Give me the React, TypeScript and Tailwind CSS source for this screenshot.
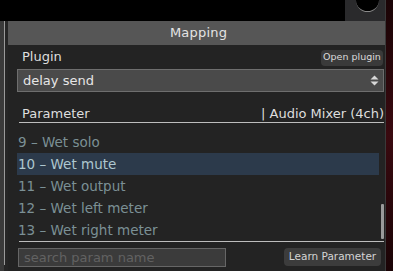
import React from 'react';

const rows = [
  { id: 9, name: 'Wet solo' },
  { id: 10, name: 'Wet mute' },
  { id: 11, name: 'Wet output' },
  { id: 12, name: 'Wet left meter' },
  { id: 13, name: 'Wet right meter' },
];

export default function App() {
  const selected = 10;
  return (
    <div className="flex h-[271px] w-[393px] overflow-hidden bg-black text-[#dcdcdc]" style={{ fontFamily: '"DejaVu Sans", "Liberation Sans", sans-serif' }}>
      {/* left strip */}
      <div className="flex w-[8px] flex-col">
        <div className="h-[21px] bg-black" />
        <div className="flex flex-1 bg-[#262626]">
          <div className="w-[4px] bg-[#3a3a3a]" />
          <div className="mb-[6px] w-[1px] bg-[#9a9a9a]" />
        </div>
      </div>

      {/* main panel */}
      <div className="flex w-[377px] flex-col">
        <div className="flex h-[21px] justify-end bg-black">
          <div className="relative w-[40px] overflow-hidden bg-[#2a2a2c]">
            <div className="absolute left-[11px] top-[-11px] h-[23px] w-[23px] rounded-full border-b border-[#8a8a8a] bg-black" />
          </div>
        </div>
        <div className="flex h-[24px] items-center justify-center bg-[#565656] pl-[4px] text-[13px] tracking-[0.2px] text-[#e4e4e4]">
          Mapping
        </div>

        <div className="flex flex-1 flex-col bg-[#232323] pl-[9px] pr-[1px]">
          <div className="flex h-[24px] items-center justify-between">
            <span className="pl-[5px] text-[13px] text-[#dedede]">Plugin</span>
            <button className="mr-[1px] mt-[1px] h-[16px] w-[62px] rounded-[4px] bg-[#3a3a3a] text-[9.5px] text-[#dadada]">Open plugin</button>
          </div>

          <div className="flex h-[23px] items-center justify-between border border-[#6e6e6e] bg-[#4a4a4a] pl-[5px] pr-[4px]">
            <span className="text-[13px] text-[#e6e6e6]">delay send</span>
            <svg width="9" height="11" viewBox="0 0 9 11">
              <path d="M4.5 0.5 L8.5 4.5 L0.5 4.5 Z" fill="#d8d8d8" />
              <path d="M4.5 10.5 L8.5 6.5 L0.5 6.5 Z" fill="#d8d8d8" />
            </svg>
          </div>

          <div className="ml-[2px] mt-[15px] flex h-[16px] items-end justify-between border-b border-[#bdbdbd] pb-[1px] pl-[3px] text-[13px] leading-[15px] text-[#dedede]">
            <span>Parameter</span>
            <span>| Audio Mixer (4ch)</span>
          </div>

          <div className="flex pt-[8px]">
            <div className="flex w-[362px] flex-col">
              {rows.map(r => (
                <div
                  key={r.id}
                  className={`flex h-[22px] items-center pl-[1px] text-[13.5px] ${r.id === selected ? 'bg-[#2c3a4b] text-[#aec7cf]' : 'text-[#7b9095]'}`}
                >
                  {r.id} – {r.name}
                </div>
              ))}
            </div>
            <div className="ml-[2px] flex w-[3px] flex-col justify-end pb-[2px]">
              <div className="h-[35px] rounded-[1px] bg-[#9a9a9a]" />
            </div>
          </div>

          <div className="ml-[2px] h-[1px] bg-[#bdbdbd]" />

          <div className="mt-[6px] flex items-start justify-between">
            <input
              placeholder="search param name"
              className="ml-[1px] h-[19px] w-[208px] border border-[#666666] bg-[#3b3b3b] px-[5px] text-[13px] text-[#dddddd] outline-none placeholder:text-[#626262]"
            />
            <button className="mr-[3px] h-[18px] w-[97px] rounded-[4px] bg-[#3c3c3c] text-[10.5px] text-[#d4d4d4]">Learn Parameter</button>
          </div>
        </div>
      </div>

      {/* right strip */}
      <div className="flex w-[8px]">
        <div className="w-[1px] bg-[#3a3a3a]" />
        <div className="flex-1 bg-gradient-to-b from-[#1a0406] via-[#3a0a10] to-[#1a0406]" />
      </div>
    </div>
  );
}
